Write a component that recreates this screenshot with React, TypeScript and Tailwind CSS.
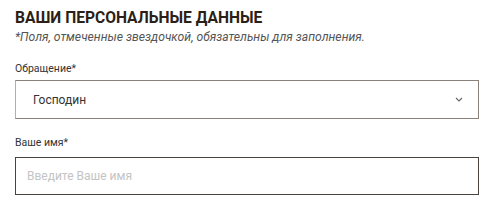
import React from 'react';

const App: React.FC = () => {
  return (
    <div
      className="w-[500px] h-[207px] bg-white px-[15px] pt-[9px] text-[#2b2119]"
      style={{ fontFamily: 'Roboto, "Liberation Sans", sans-serif' }}
    >
      <h2 className="text-[15.6px] leading-[19px] font-bold uppercase text-[#2b1f17]">
        Ваши персональные данные
      </h2>
      <p className="mt-[2px] text-[12.2px] leading-[15px] italic text-[#555]">
        *Поля, отмеченные звездочкой, обязательны для заполнения.
      </p>

      <div className="mt-[17px]">
        <label className="block text-[10.5px] leading-[13px] text-[#333]">Обращение*</label>
        <div className="mt-[5px] w-[464px] h-[39px] border border-[#8a817a] border-l-[#b5aea8] flex items-center justify-between pl-[17px] pr-[15px]">
          <span className="text-[12px] text-[#333]">Господин</span>
          <svg width="8" height="5" viewBox="0 0 8 5" fill="none">
            <path d="M1 1l3 3 3-3" stroke="#666" strokeWidth="1.1" />
          </svg>
        </div>
      </div>

      <div className="mt-[17px]">
        <label className="block text-[10.5px] leading-[13px] text-[#333]">Ваше имя*</label>
        <div className="mt-[8px] w-[464px] h-[38px] border border-[#4a413b] flex items-center pl-[11px]">
          <span className="text-[12px] text-[#c4c4c4]">Введите Ваше имя</span>
        </div>
      </div>
    </div>
  );
};

export default App;
